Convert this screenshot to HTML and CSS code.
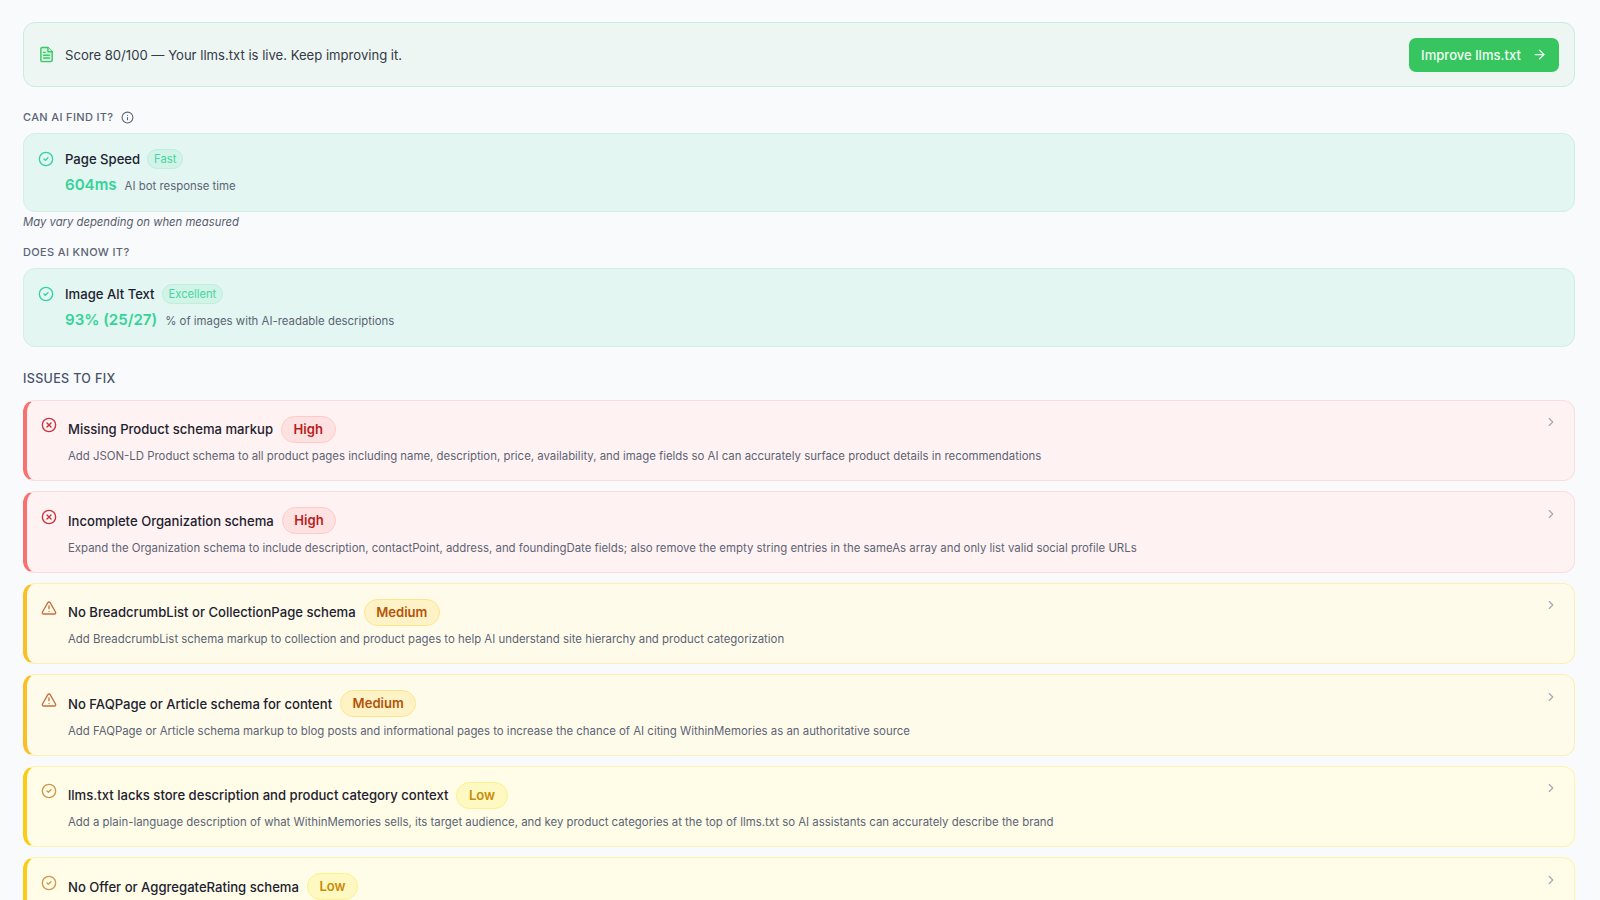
FILE: index.html
```html
<!DOCTYPE html>
<html lang="en">
<head>
	<meta charset="UTF-8">
	<title>AI Readiness</title>
	<link rel="stylesheet" href="styles.css">
</head>
<body>
	<main class="report">
		<section class="banner">
			<svg class="banner-icon" viewBox="0 0 24 24"><path d="M14 2H6a2 2 0 0 0-2 2v16a2 2 0 0 0 2 2h12a2 2 0 0 0 2-2V8z"/><path d="M14 2v6h6"/><path d="M16 13H8"/><path d="M16 17H8"/><path d="M10 9H8"/></svg>
			<p class="banner-text">Score 80/100 — Your llms.txt is live. Keep improving it.</p>
			<button class="btn-improve">Improve llms.txt
				<svg viewBox="0 0 24 24"><path d="M5 12h14"/><path d="m12 5 7 7-7 7"/></svg>
			</button>
		</section>

		<h2 class="group-title group-first">Can AI find it?
			<svg class="info" viewBox="0 0 24 24"><circle cx="12" cy="12" r="10"/><path d="M12 16v-4"/><path d="M12 8h.01"/></svg>
		</h2>
		<section class="metric">
			<svg class="metric-icon" viewBox="0 0 24 24"><circle cx="12" cy="12" r="10"/><path d="m9 12 2 2 4-4"/></svg>
			<div>
				<div class="metric-head"><span class="metric-name">Page Speed</span><span class="metric-tag">Fast</span></div>
				<div class="metric-data"><strong>604ms</strong><span>AI bot response time</span></div>
			</div>
		</section>
		<p class="note">May vary depending on when measured</p>

		<h2 class="group-title">Does AI know it?</h2>
		<section class="metric">
			<svg class="metric-icon" viewBox="0 0 24 24"><circle cx="12" cy="12" r="10"/><path d="m9 12 2 2 4-4"/></svg>
			<div>
				<div class="metric-head"><span class="metric-name">Image Alt Text</span><span class="metric-tag">Excellent</span></div>
				<div class="metric-data"><strong>93% (25/27)</strong><span>% of images with AI-readable descriptions</span></div>
			</div>
		</section>

		<h2 class="issues-title">Issues to fix</h2>
		<div class="issues">
			<article class="issue high">
				<svg class="issue-icon" viewBox="0 0 24 24"><circle cx="12" cy="12" r="10"/><path d="m15 9-6 6"/><path d="m9 9 6 6"/></svg>
				<div class="issue-body">
					<div class="issue-head"><h3>Missing Product schema markup</h3><span class="pill">High</span></div>
					<p>Add JSON-LD Product schema to all product pages including name, description, price, availability, and image fields so AI can accurately surface product details in recommendations</p>
				</div>
				<svg class="chevron" viewBox="0 0 24 24"><path d="m9 18 6-6-6-6"/></svg>
			</article>
			<article class="issue high">
				<svg class="issue-icon" viewBox="0 0 24 24"><circle cx="12" cy="12" r="10"/><path d="m15 9-6 6"/><path d="m9 9 6 6"/></svg>
				<div class="issue-body">
					<div class="issue-head"><h3>Incomplete Organization schema</h3><span class="pill">High</span></div>
					<p>Expand the Organization schema to include description, contactPoint, address, and foundingDate fields; also remove the empty string entries in the sameAs array and only list valid social profile URLs</p>
				</div>
				<svg class="chevron" viewBox="0 0 24 24"><path d="m9 18 6-6-6-6"/></svg>
			</article>
			<article class="issue medium">
				<svg class="issue-icon" viewBox="0 0 24 24"><path d="m21.73 18-8-14a2 2 0 0 0-3.48 0l-8 14A2 2 0 0 0 4 21h16a2 2 0 0 0 1.73-3"/><path d="M12 9v4"/><path d="M12 17h.01"/></svg>
				<div class="issue-body">
					<div class="issue-head"><h3>No BreadcrumbList or CollectionPage schema</h3><span class="pill">Medium</span></div>
					<p>Add BreadcrumbList schema markup to collection and product pages to help AI understand site hierarchy and product categorization</p>
				</div>
				<svg class="chevron" viewBox="0 0 24 24"><path d="m9 18 6-6-6-6"/></svg>
			</article>
			<article class="issue medium">
				<svg class="issue-icon" viewBox="0 0 24 24"><path d="m21.73 18-8-14a2 2 0 0 0-3.48 0l-8 14A2 2 0 0 0 4 21h16a2 2 0 0 0 1.73-3"/><path d="M12 9v4"/><path d="M12 17h.01"/></svg>
				<div class="issue-body">
					<div class="issue-head"><h3>No FAQPage or Article schema for content</h3><span class="pill">Medium</span></div>
					<p>Add FAQPage or Article schema markup to blog posts and informational pages to increase the chance of AI citing WithinMemories as an authoritative source</p>
				</div>
				<svg class="chevron" viewBox="0 0 24 24"><path d="m9 18 6-6-6-6"/></svg>
			</article>
			<article class="issue low">
				<svg class="issue-icon" viewBox="0 0 24 24"><circle cx="12" cy="12" r="10"/><path d="m9 12 2 2 4-4"/></svg>
				<div class="issue-body">
					<div class="issue-head"><h3>llms.txt lacks store description and product category context</h3><span class="pill">Low</span></div>
					<p>Add a plain-language description of what WithinMemories sells, its target audience, and key product categories at the top of llms.txt so AI assistants can accurately describe the brand</p>
				</div>
				<svg class="chevron" viewBox="0 0 24 24"><path d="m9 18 6-6-6-6"/></svg>
			</article>
			<article class="issue low">
				<svg class="issue-icon" viewBox="0 0 24 24"><circle cx="12" cy="12" r="10"/><path d="m9 12 2 2 4-4"/></svg>
				<div class="issue-body">
					<div class="issue-head"><h3>No Offer or AggregateRating schema</h3><span class="pill">Low</span></div>
				</div>
				<svg class="chevron" viewBox="0 0 24 24"><path d="m9 18 6-6-6-6"/></svg>
			</article>
		</div>
	</main>
</body>
</html>
```

FILE: styles.css
```css
html, body {
	height: 100%;
	overflow: hidden;
}
body {
	background: #f9fafc;
	color: #1d2230;
	font-family: Inter, "Liberation Sans", sans-serif;
	margin: 0;
}
svg {
	fill: none;
	flex: none;
	stroke: currentColor;
	stroke-linecap: round;
	stroke-linejoin: round;
	stroke-width: 2;
}
.report {
	padding: 22px 25px 0 23px;
}

/* banner */
.banner {
	align-items: center;
	background: #edf6f3;
	border: 1.5px solid #c9eddc;
	border-radius: 12px;
	box-sizing: border-box;
	display: flex;
	height: 65px;
	padding: 0 15px 0 13.5px;
}
.banner-icon {
	color: #3cc768;
	fill: #d3f3df;
	height: 17px;
	margin-right: 10.5px;
	width: 17px;
}
.banner-text {
	color: #343a46;
	flex: 1;
	font-size: 13.1px;
	margin: 0;
}
.btn-improve {
	align-items: center;
	background: #36c55f;
	border: none;
	border-radius: 7px;
	color: #f2fdf5;
	display: flex;
	font: 500 13.1px Inter, sans-serif;
	gap: 11px;
	height: 34px;
	padding: 0 12px;
}
.btn-improve svg {
	height: 15px;
	width: 15px;
}

/* metric groups */
.group-title {
	align-items: center;
	color: #5c6475;
	display: flex;
	font-size: 11px;
	font-weight: 500;
	gap: 7px;
	letter-spacing: 0.35px;
	line-height: 14px;
	margin: 0 0 9px;
	text-transform: uppercase;
}
.group-first {
	margin-top: 23px;
}
.info {
	height: 13px;
	width: 13px;
}
.metric {
	background: #e3f6f1;
	border: 1.5px solid #d0f0e6;
	border-radius: 12px;
	box-sizing: border-box;
	display: flex;
	height: 79px;
	padding: 14.5px 15px 0 14px;
}
.metric-icon {
	color: #34d399;
	height: 16px;
	margin-right: 11px;
	margin-top: 2px;
	width: 16px;
}
.metric-head {
	align-items: center;
	display: flex;
	gap: 7px;
	height: 20px;
}
.metric-name {
	font-size: 13.1px;
	font-weight: 500;
}
.metric-tag {
	background: #d2f3e8;
	border: 1px solid #bfeedd;
	border-radius: 10px;
	color: #45d6a4;
	font-size: 11.2px;
	line-height: 18px;
	padding: 0 6px;
}
.metric-data {
	align-items: baseline;
	display: flex;
	gap: 8px;
	margin-top: 6px;
}
.metric-data strong {
	color: #34d399;
	font-size: 15.1px;
	font-weight: 600;
}
.metric-data span {
	color: #5c6475;
	font-size: 11.4px;
}
.note {
	color: #555d6e;
	font-size: 11.3px;
	font-style: italic;
	line-height: 14px;
	margin: 3px 0 16px;
}

/* issues */
.issues-title {
	color: #47526a;
	font-size: 12.5px;
	font-weight: 500;
	letter-spacing: 0.35px;
	line-height: 16px;
	margin: 24px 0 12.5px;
	text-transform: uppercase;
}
.issues {
	display: flex;
	flex-direction: column;
	gap: 10px;
}
.issue {
	border: 1.5px solid;
	border-left-width: 4px;
	border-radius: 12px;
	box-sizing: border-box;
	display: flex;
	height: 81.6px;
	padding: 14.5px 16px 0 14px;
}
.issue.high {
	background: #fff2f2;
	border-color: #fcdcdc;
	border-left-color: #f87171;
}
.issue.medium {
	background: #fffbeb;
	border-color: #fdeeb5;
	border-left-color: #fbbf24;
}
.issue.low {
	background: #fffce8;
	border-color: #fef3b0;
	border-left-color: #facc15;
}
.issue-icon {
	height: 16px;
	margin-right: 11px;
	margin-top: 2px;
	width: 16px;
}
.high .issue-icon {
	color: #c7343f;
}
.medium .issue-icon {
	color: #c2703d;
}
.low .issue-icon {
	color: #d0974a;
}
.issue-body {
	flex: 1;
}
.issue-head {
	align-items: center;
	display: flex;
	gap: 8px;
	height: 28px;
}
.issue-head h3 {
	font-size: 13.1px;
	font-weight: 500;
	margin: 0;
}
.pill {
	border: 1.5px solid;
	border-radius: 14px;
	box-sizing: border-box;
	font-size: 13.1px;
	font-weight: 600;
	line-height: 25px;
	padding: 0 11.5px;
}
.high .pill {
	background: #fee2e2;
	border-color: #fecaca;
	color: #b91c1c;
}
.medium .pill {
	background: #fef3c7;
	border-color: #fde68a;
	color: #b45309;
}
.low .pill {
	background: #fef9c3;
	border-color: #fef08a;
	color: #ca8a04;
}
.issue-body p {
	color: #5c6475;
	font-size: 11.4px;
	line-height: 16px;
	margin: 5px 0 0;
}
.chevron {
	color: #a3a8b3;
	height: 14px;
	width: 14px;
}
```
